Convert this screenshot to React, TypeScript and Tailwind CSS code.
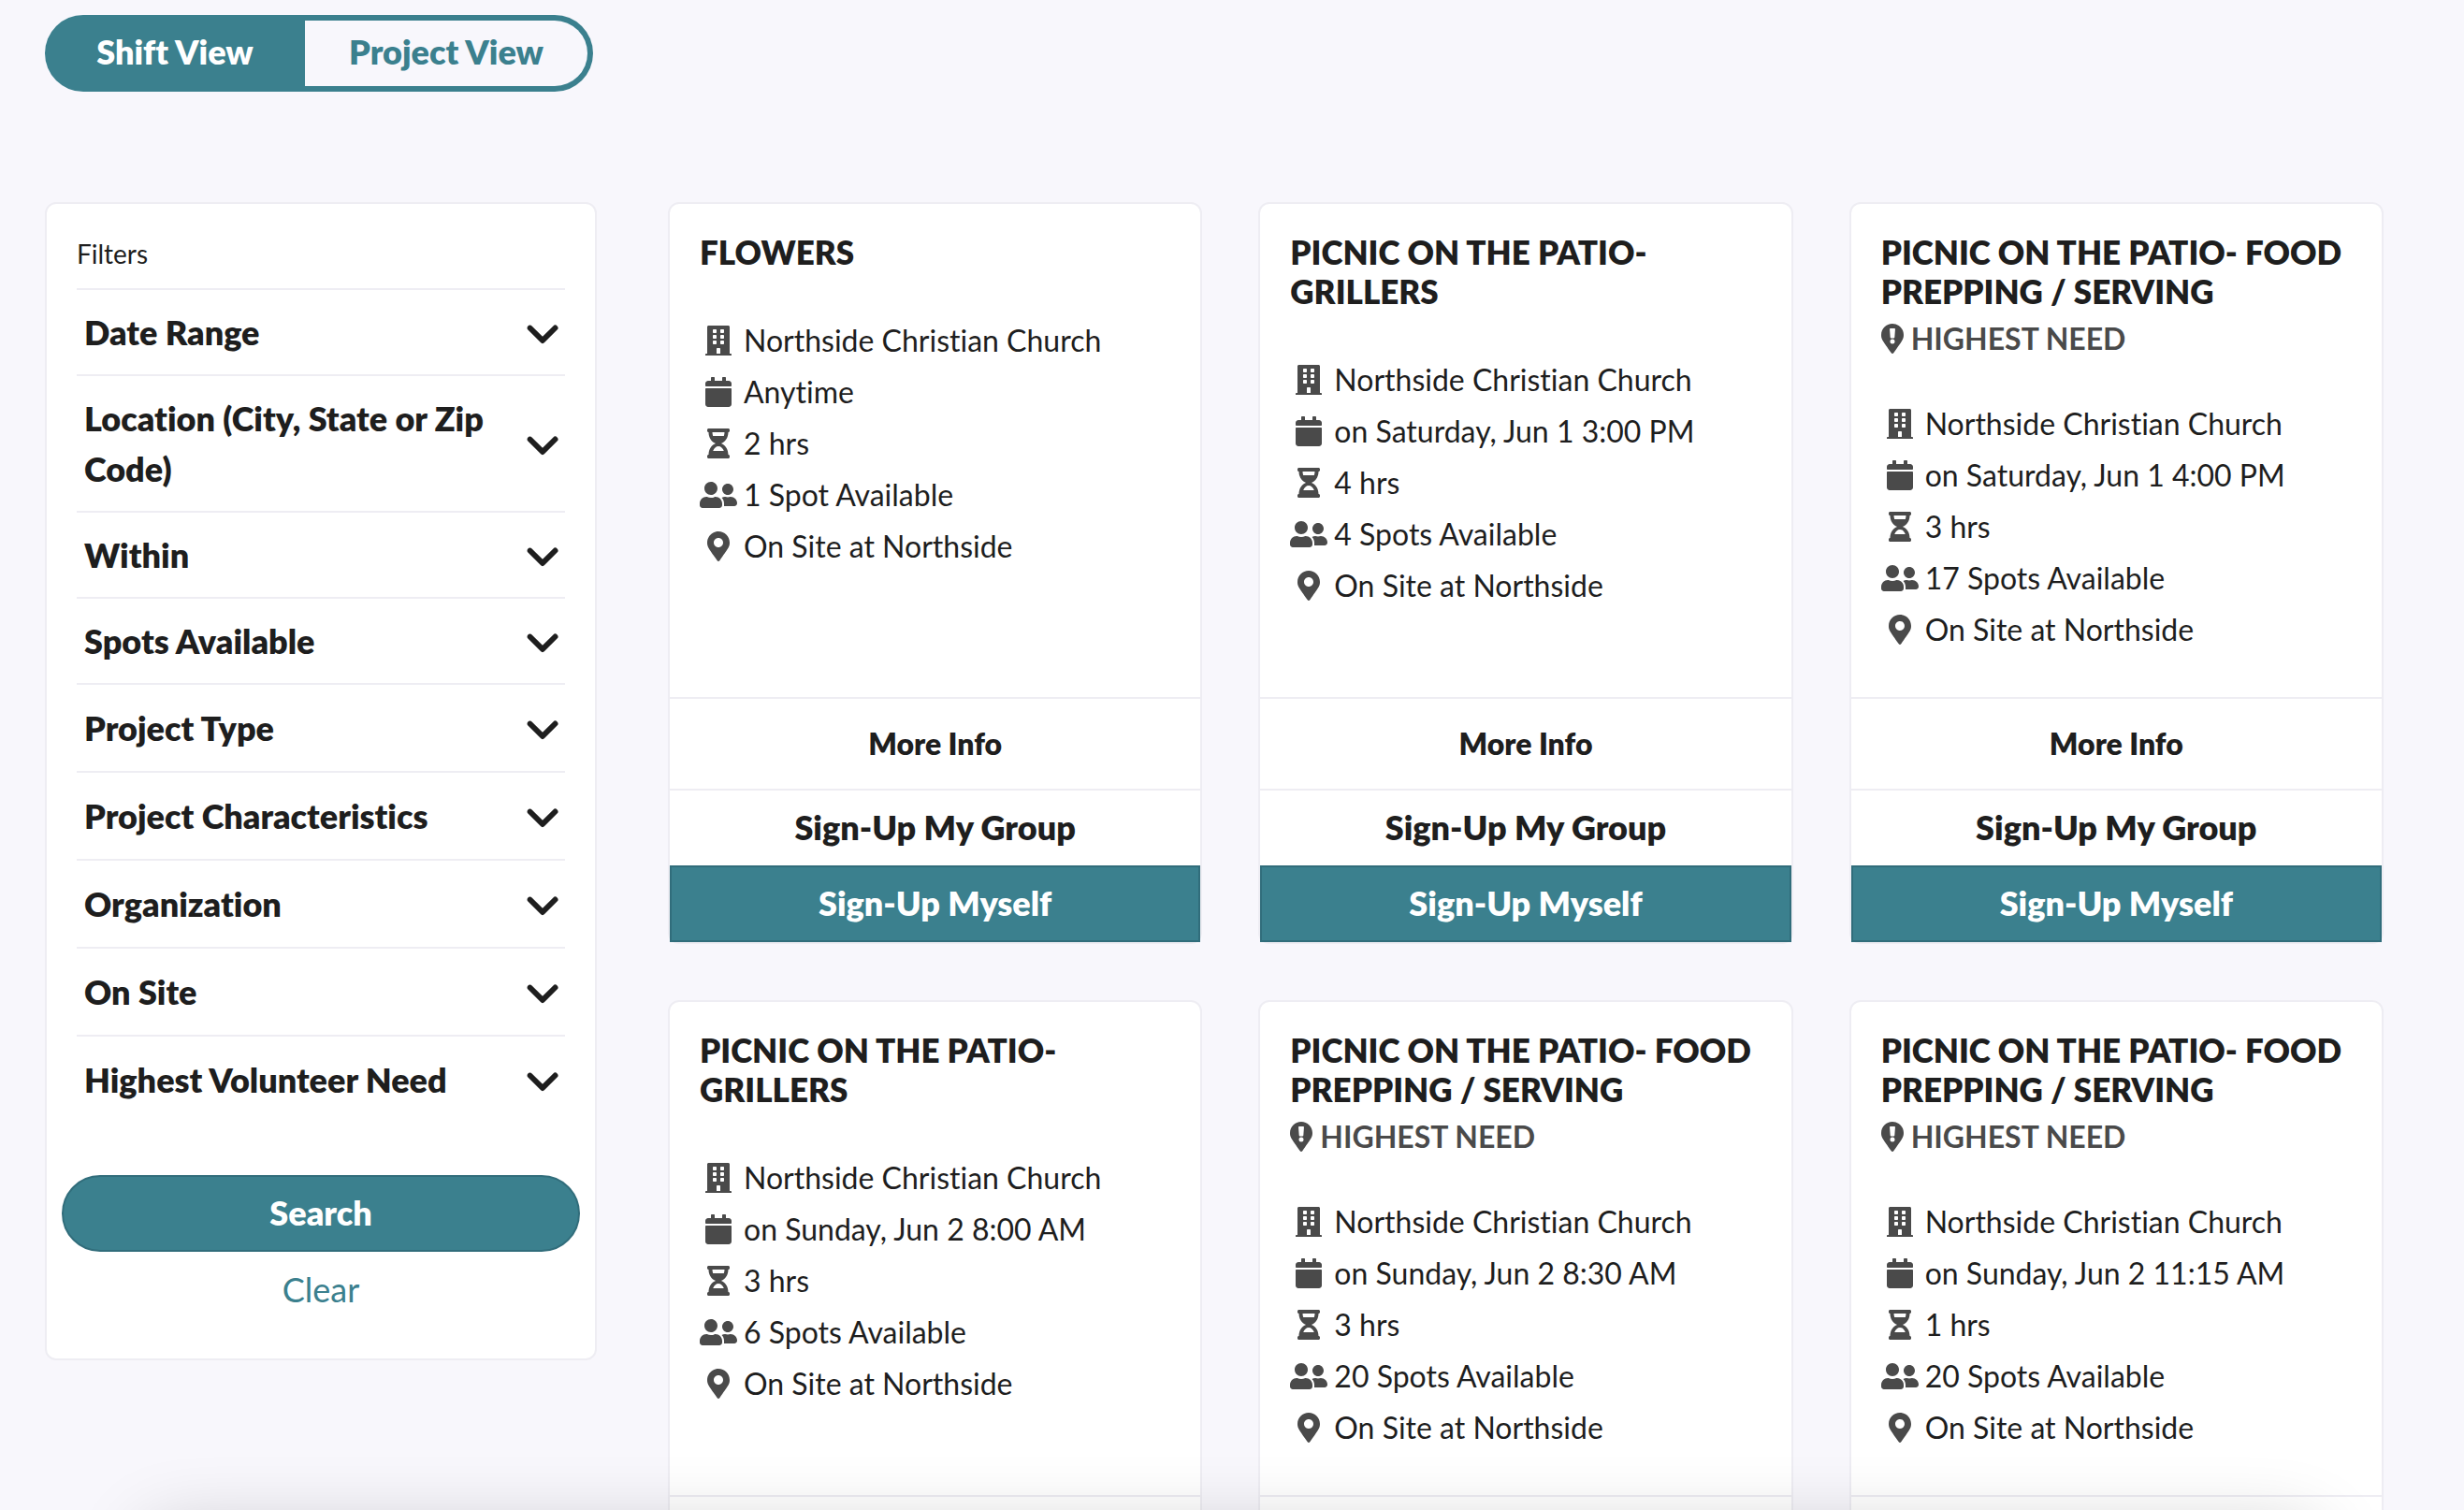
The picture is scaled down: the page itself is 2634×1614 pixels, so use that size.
import type { ReactNode } from "react";
import { FaBuilding, FaCalendar, FaHourglassHalf, FaMapMarkerAlt, FaUserFriends } from "react-icons/fa";
import { FaChevronDown } from "react-icons/fa6";

type Shift = { title: string; highestNeed?: boolean; when: string; length: string; spots: string };

const shifts: Shift[] = [
  { title: "FLOWERS", when: "Anytime", length: "2 hrs", spots: "1 Spot Available" },
  { title: "PICNIC ON THE PATIO- GRILLERS", when: "on Saturday, Jun 1 3:00 PM", length: "4 hrs", spots: "4 Spots Available" },
  { title: "PICNIC ON THE PATIO- FOOD PREPPING / SERVING", highestNeed: true, when: "on Saturday, Jun 1 4:00 PM", length: "3 hrs", spots: "17 Spots Available" },
  { title: "PICNIC ON THE PATIO- GRILLERS", when: "on Sunday, Jun 2 8:00 AM", length: "3 hrs", spots: "6 Spots Available" },
  { title: "PICNIC ON THE PATIO- FOOD PREPPING / SERVING", highestNeed: true, when: "on Sunday, Jun 2 8:30 AM", length: "3 hrs", spots: "20 Spots Available" },
  { title: "PICNIC ON THE PATIO- FOOD PREPPING / SERVING", highestNeed: true, when: "on Sunday, Jun 2 11:15 AM", length: "1 hrs", spots: "20 Spots Available" },
];

const compactFilters = ["Date Range", "Location (City, State or Zip Code)", "Within", "Spots Available"];
const roomyFilters = ["Project Type", "Project Characteristics", "Organization", "On Site", "Highest Volunteer Need"];

function FilterButton({ label }: { label: string }) {
  return (
    <button type="button" aria-expanded="false" className="flex w-full items-center justify-between gap-8 px-2 text-left text-4xl leading-[54px] font-extrabold">
      <span>{label}</span>
      <FaChevronDown className="-mr-0.5 size-9 shrink-0 overflow-visible" stroke="currentColor" strokeWidth={20} aria-hidden />
    </button>
  );
}

function NeedPin() {
  return (
    <svg viewBox="0 0 384 512" className="h-8 w-6 shrink-0" fill="currentColor" aria-hidden>
      <path
        fillRule="evenodd"
        d="M172.268 501.67C26.97 291.031 0 269.413 0 192 0 85.961 85.961 0 192 0s192 85.961 192 192c0 77.413-26.97 99.031-172.268 309.67-9.535 13.774-29.93 13.773-39.464 0zM160 80c-9 0-16 8-15 17l10 136c1 8 7 15 15 15h44c8 0 14-7 15-15l10-136c1-9-6-17-15-17zM192 264a40 40 0 1 0 0 80 40 40 0 1 0 0-80z"
      />
    </svg>
  );
}

function Detail({ icon, children }: { icon: ReactNode; children: ReactNode }) {
  return (
    <li className="flex h-[55px] items-center gap-[7px]">
      <span className="flex h-8 w-10 shrink-0 justify-center text-[32px] text-[#4a4a4a]">{icon}</span>
      <span className="text-[32px] leading-10">{children}</span>
    </li>
  );
}

function ShiftCard({ shift }: { shift: Shift }) {
  return (
    <article className="flex flex-col rounded-xl border-2 border-[#eeedf3] bg-white">
      <div className="flex-1 px-8 pt-[30px] pb-[45px]">
        <h2 className="text-[35px] leading-[42px] font-extrabold">{shift.title}</h2>
        {shift.highestNeed && (
          <p className="mt-[13px] flex items-center gap-2 text-[32px] leading-[34px] font-bold text-[#4a4a4a]">
            <NeedPin />
            HIGHEST NEED
          </p>
        )}
        <ul className="mt-[46px]">
          <Detail icon={<FaBuilding />}>Northside Christian Church</Detail>
          <Detail icon={<FaCalendar />}>{shift.when}</Detail>
          <Detail icon={<FaHourglassHalf />}>{shift.length}</Detail>
          <Detail icon={<FaUserFriends className="w-10" />}>{shift.spots}</Detail>
          <Detail icon={<FaMapMarkerAlt />}>On Site at Northside</Detail>
        </ul>
      </div>
      <button type="button" className="h-[100px] border-y-2 border-[#eeedf3] text-[32px] font-extrabold">
        More Info
      </button>
      <button type="button" className="h-20 pb-0.5 text-4xl font-extrabold">
        Sign-Up My Group
      </button>
      <button type="button" className="h-[82px] border-2 border-[#316d7b] bg-[#3b808e] pb-0.5 text-4xl font-extrabold text-white">
        Sign-Up Myself
      </button>
    </article>
  );
}

export default function App() {
  return (
    <div className="relative h-screen overflow-hidden bg-[#f8f7fc] pt-4 pr-[86px] pl-12 font-['Lato',sans-serif] text-[#1e1e1e] [font-variant-ligatures:none]">
      <div className="flex h-[82px] text-4xl font-extrabold">
        <button type="button" aria-pressed="true" className="w-[278px] rounded-l-full bg-[#3b808e] pb-1 text-white">
          Shift View
        </button>
        <button type="button" aria-pressed="false" className="w-[308px] rounded-r-full border-6 border-l-0 border-[#3b808e] pb-1 text-[#3b808e]">
          Project View
        </button>
      </div>

      <div className="mt-[118px] flex items-start gap-[76px]">
        <aside className="w-[590px] shrink-0 rounded-xl border-2 border-[#eeedf3] bg-white px-4 pb-8">
          <div className="px-4">
            <p className="pt-8 pb-4 text-[28px] leading-[42px]">Filters</p>
            <ul>
              {compactFilters.map((label) => (
                <li key={label} className="border-t-2 border-[#eeedf3] py-[18px]">
                  <FilterButton label={label} />
                </li>
              ))}
              {roomyFilters.map((label) => (
                <li key={label} className="border-t-2 border-[#eeedf3] py-[19px]">
                  <FilterButton label={label} />
                </li>
              ))}
            </ul>
          </div>
          <button type="button" className="mt-14 h-[82px] w-full rounded-full border-2 border-[#316d7b] bg-[#3b808e] pb-0.5 text-4xl font-extrabold text-white">
            Search
          </button>
          <button type="button" className="h-[82px] w-full pb-0.5 text-4xl text-[#3b808e]">
            Clear
          </button>
        </aside>

        <main className="grid flex-1 grid-cols-3 gap-[60px]">
          {shifts.map((shift, i) => (
            <ShiftCard key={i} shift={shift} />
          ))}
        </main>
      </div>

      <div className="pointer-events-none absolute inset-x-0 bottom-0 h-32 overflow-hidden" aria-hidden>
        <div className="absolute inset-x-[155px] top-full mt-5 h-80 rounded-3xl shadow-[0_0_80px_rgba(0,0,0,0.2)]" />
      </div>
    </div>
  );
}
